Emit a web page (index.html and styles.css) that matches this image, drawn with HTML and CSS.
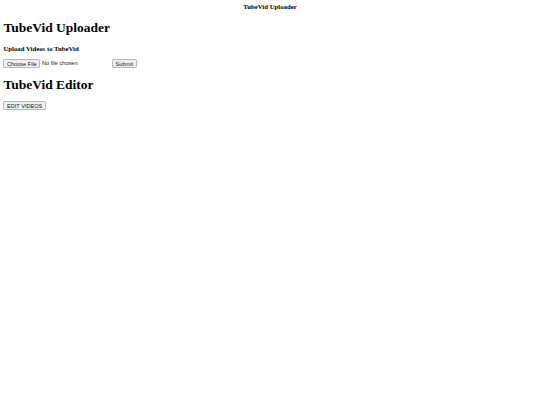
FILE: index.html
```html
<!DOCTYPE html>
<html>
<head>
<meta charset="utf-8">
<link rel="stylesheet" href="styles.css">
</head>
<body>
<div class="topbar">TubeVid Uploader</div>
<h1 class="title">TubeVid Uploader</h1>
<h4 class="sub">Upload Videos to TubeVid</h4>
<form class="upload">
<input type="file" class="file"> <input type="submit" value="Submit" class="btn">
</form>
<h1 class="title editor">TubeVid Editor</h1>
<button class="btn">EDIT VIDEOS</button>
</body>
</html>
```
FILE: styles.css
```css
html { zoom: 0.4219; overflow: hidden; }
body { font-family: "Liberation Serif", serif; color: #000; }
.topbar { text-align: center; font-weight: bold; }
.title { margin: 23.8px 0 19px; }
.title.editor { margin-top: 21.4px; }
.sub { margin: 21.3px 0 16.5px; }
.upload { margin: 0; }
.file { font-family: "Liberation Sans", Arial, sans-serif; font-size: 13.33px; color: #222; }
.file::file-selector-button,
.btn {
  font-family: "Liberation Sans", Arial, sans-serif;
  font-size: 13.33px;
  color: #222;
  background: #efefef;
  border: 2px solid #b5b5b5;
  border-radius: 3px;
  padding: 1px 6px;
}
.file::file-selector-button { margin-right: 4px; }
```
